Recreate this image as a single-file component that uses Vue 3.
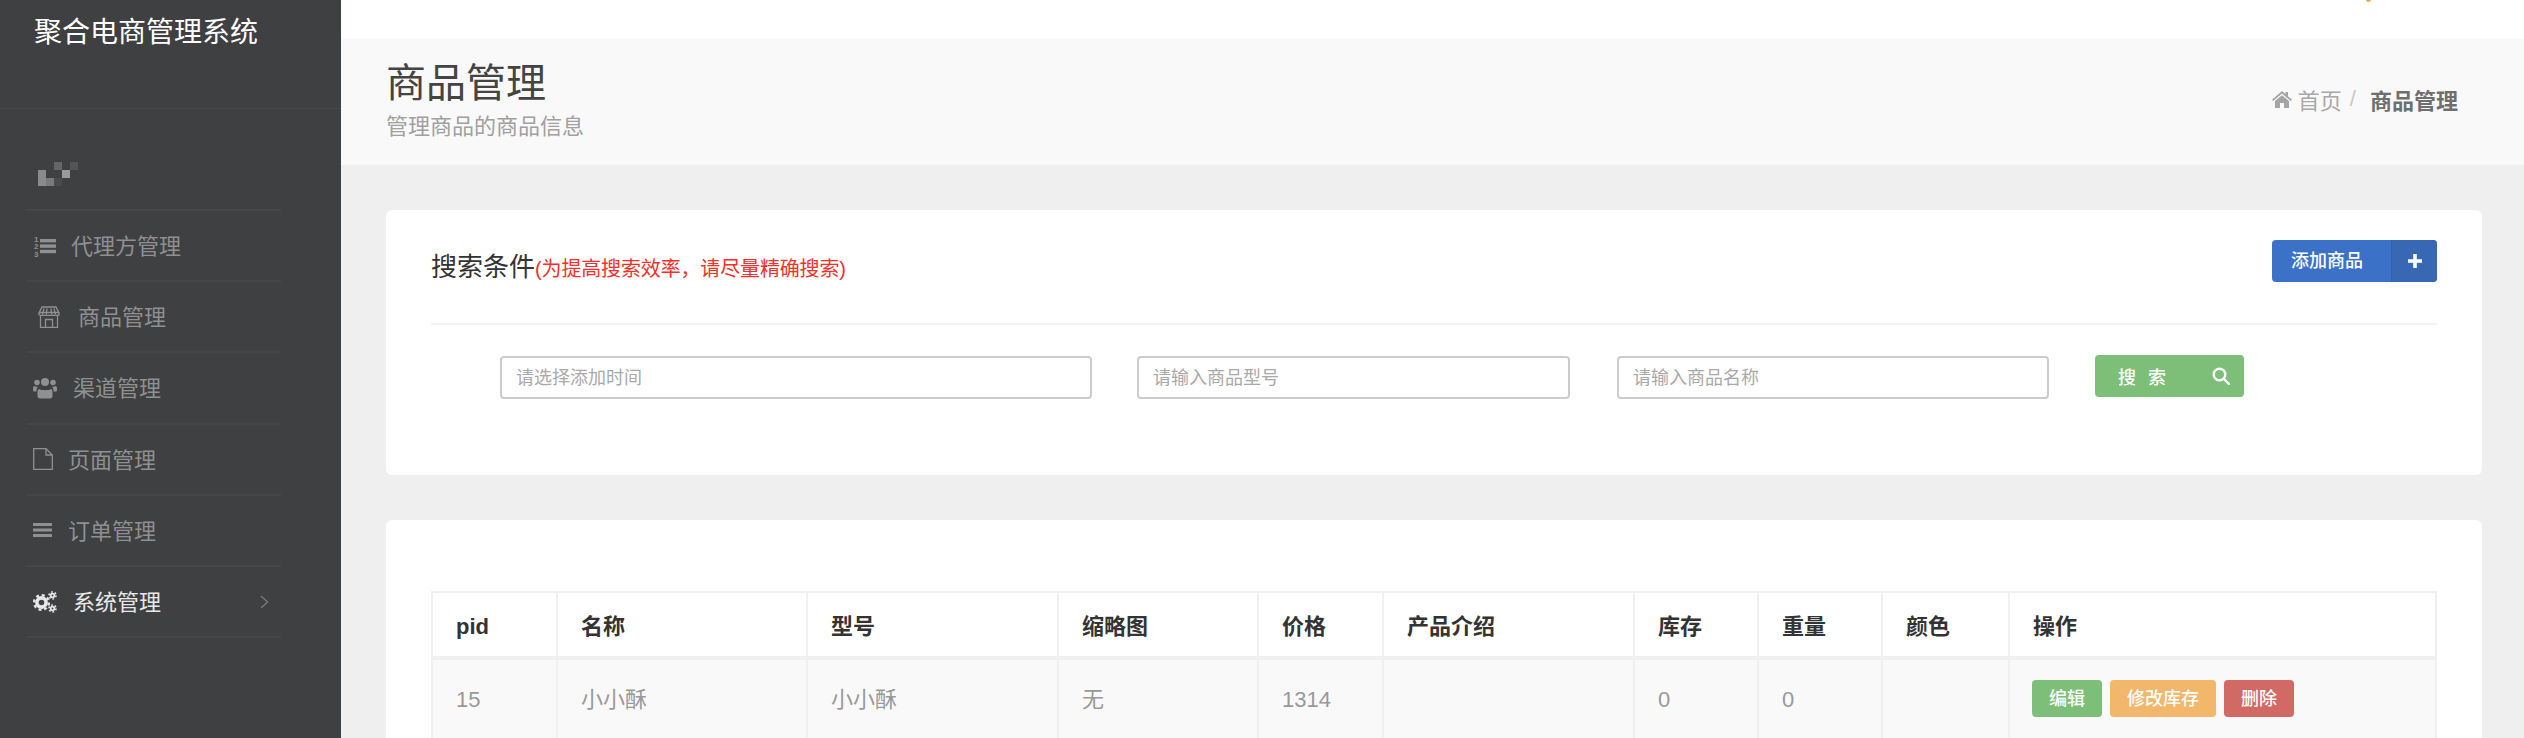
<script setup>
const cols = [
  { label: 'pid', w: 125 }, { label: '名称', w: 250 }, { label: '型号', w: 251 }, { label: '缩略图', w: 200 },
  { label: '价格', w: 125 }, { label: '产品介绍', w: 251 }, { label: '库存', w: 124 }, { label: '重量', w: 124 },
  { label: '颜色', w: 127 }, { label: '操作', w: 427 }
]
const row = ['15', '小小酥', '小小酥', '无', '1314', '', '0', '0', '']
</script>

<template>
  <div class="app">
    <aside class="side">
      <div class="brand"><span>聚合电商管理系统</span></div>
      <ul class="nav">
        <li class="nav-item first">
          <svg class="mosaic" width="40" height="24" viewBox="0 0 40 24">
            <rect x="0" y="8" width="8" height="16" fill="#8b8b8b" />
            <rect x="8" y="16" width="8" height="8" fill="#7b7b7b" />
            <rect x="16" y="0" width="8" height="8" fill="#666" />
            <rect x="24" y="8" width="8" height="8" fill="#9a9a9a" />
            <rect x="32" y="0" width="8" height="8" fill="#555" />
            <rect x="16" y="16" width="8" height="8" fill="#4a4b4d" />
          </svg>
        </li>
        <li class="nav-item">
          <svg class="ic i-list" viewBox="0 0 22 22" fill="currentColor">
            <rect x="6" y="4" width="16" height="3.4" />
            <rect x="6" y="9.4" width="16" height="3.4" />
            <rect x="6" y="14.8" width="16" height="3.4" />
            <text x="0" y="6.5" class="tiny">1</text>
            <text x="0" y="14" class="tiny">2</text>
            <text x="0" y="21.5" class="tiny">3</text>
          </svg>
          <span>代理方管理</span>
        </li>
        <li class="nav-item">
          <svg class="ic i-shop" viewBox="0 0 22 22" fill="none" stroke="currentColor" stroke-width="1.3">
            <path d="M4 1h14l3.2 6.4a2 2 0 0 1-2 2h-16.400a2 2 0 0 1-2-2z" />
            <path d="M.8 6.500h20.400M6 2.500l-1.500 6M9 2.500l-.7 6M13 2.500l.7 6M16 2.500l1.500 6" />
            <path d="M2.500 9.500v12h17v-12M7.500 21.500v-8h7v8" />
          </svg>
          <span>商品管理</span>
        </li>
        <li class="nav-item">
          <svg class="ic i-wide" viewBox="0 0 24 22" fill="currentColor">
            <circle cx="12" cy="5" r="4" />
            <circle cx="4" cy="5.500" r="2.800" />
            <circle cx="20" cy="5.500" r="2.800" />
            <path d="M6 12c2 1.600 10 1.600 12 0 1.200.6 1.500 2 1.500 4v3c0 1.500-1 2.500-2.500 2.500H7c-1.500 0-2.500-1-2.500-2.500v-3c0-2 .3-3.400 1.500-4z" />
            <path d="M0 11.500c0-1.500.6-2.500 1.500-2.500 1.500 1 3.500 1 4 .6-1.500 1-2 2.400-2 5H1.500C.5 14.600 0 14 0 13zM24 11.500c0-1.500-.6-2.500-1.500-2.500-1.500 1-3.500 1-4 .6 1.500 1 2 2.400 2 5h2c1 0 1.500-.6 1.500-1.600z" />
          </svg>
          <span>渠道管理</span>
        </li>
        <li class="nav-item">
          <svg class="ic i-file" viewBox="0 0 20 22" fill="none" stroke="currentColor" stroke-width="1.300">
            <path d="M.7.700h12.300l6.300 6.300v14.300H.7z" />
            <path d="M13 .7v6.300h6.300" />
          </svg>
          <span>页面管理</span>
        </li>
        <li class="nav-item">
          <svg class="ic i-file" viewBox="0 0 20 22" fill="currentColor">
            <rect x="0" y="4" width="19" height="3" rx=".5" />
            <rect x="0" y="9.500" width="19" height="3" rx=".5" />
            <rect x="0" y="15" width="19" height="3" rx=".5" />
          </svg>
          <span>订单管理</span>
        </li>
        <li class="nav-item active">
          <svg class="ic i-wide" viewBox="0 0 24 22" fill="none" stroke="currentColor">
            <circle cx="8.500" cy="11.500" r="4.600" stroke-width="3.600" />
            <circle cx="8.500" cy="11.500" r="7.400" stroke-width="2.400" stroke-dasharray="3 2.810" />
            <circle cx="19.500" cy="4.500" r="1.800" stroke-width="1.800" />
            <circle cx="19.500" cy="4.500" r="3.500" stroke-width="1.600" stroke-dasharray="1.800 1.870" />
            <circle cx="19.500" cy="17.500" r="1.800" stroke-width="1.800" />
            <circle cx="19.500" cy="17.500" r="3.500" stroke-width="1.600" stroke-dasharray="1.800 1.870" />
          </svg>
          <span>系统管理</span>
          <svg class="chev" width="9" height="14" viewBox="0 0 9 14" fill="none" stroke="#77787a" stroke-width="1.400">
            <path d="M1 1l6.500 6L1 13" />
          </svg>
        </li>
      </ul>
    </aside>

    <main class="main">
      <header class="top"><i class="dot"></i></header>
      <section class="page-bar">
        <div class="titles">
          <h1>商品管理</h1>
          <p>管理商品的商品信息</p>
        </div>
        <nav class="crumb">
          <svg width="20" height="17" viewBox="0 0 20 17" fill="#a5a5a5">
            <path d="M10 0l3.500 3V1h2.500v4.200L20 8.700l-1.200 1.300L10 2.600 1.200 10 0 8.700z" />
            <path d="M10 4.200l7 5.800v7h-5v-5H8v5H3v-7z" />
          </svg>
          <span class="home">首页</span>
          <span class="sep">/</span>
          <b>商品管理</b>
        </nav>
      </section>

      <div class="content">
        <section class="card search">
          <div class="card-head">
            <div class="card-title">搜索条件<span class="hint">(为提高搜索效率，请尽量精确搜索)</span></div>
            <button class="add">
              <span class="add-text">添加商品</span>
              <span class="add-ic">
                <svg width="14" height="14" viewBox="0 0 14 14" fill="#fff"><path d="M5.200 0h3.600v5.200H14v3.600H8.800V14H5.200V8.800H0V5.200h5.200z" /></svg>
              </span>
            </button>
          </div>
          <div class="filters">
            <input class="f f1" placeholder="请选择添加时间" />
            <input class="f f2" placeholder="请输入商品型号" />
            <input class="f f3" placeholder="请输入商品名称" />
            <button class="go">
              <span>搜 索</span>
              <svg width="18" height="18" viewBox="0 0 18 18" fill="none" stroke="#fff" stroke-width="2.400">
                <circle cx="7.500" cy="7.500" r="5.800" />
                <path d="M11.800 11.800l5 5" stroke-linecap="round" />
              </svg>
            </button>
          </div>
        </section>

        <section class="card list">
          <table>
            <colgroup><col v-for="c in cols" :key="c.label" :style="{ width: c.w + 'px' }" /></colgroup>
            <thead>
              <tr><th v-for="c in cols" :key="c.label">{{ c.label }}</th></tr>
            </thead>
            <tbody>
              <tr>
                <td v-for="(v, i) in row" :key="i">{{ v }}</td>
                <td class="ops">
                  <button class="b green">编辑</button>
                  <button class="b orange">修改库存</button>
                  <button class="b red">删除</button>
                </td>
              </tr>
            </tbody>
          </table>
        </section>
      </div>
    </main>
  </div>
</template>

<style>
html, body { margin: 0; overflow: hidden; background: #efefef; }
</style>

<style scoped>
* { box-sizing: border-box; }
.app {
  display: flex;
  width: 2524px;
  height: 738px;
  overflow: hidden;
  font-family: "Liberation Sans", "Noto Sans CJK SC", sans-serif;
  color: #333;
}
.side { width: 341px; flex: none; background: #3f4042; }
.brand {
  height: 109px;
  padding: 14px 0 0 34px;
  border-bottom: 1px solid #47484a;
  color: #fff;
  font-size: 28px;
  line-height: 38px;
}
.nav { list-style: none; margin: 0; padding: 0 60px 0 26px; }
.nav-item {
  display: flex;
  align-items: center;
  height: 71.2px;
  padding-left: 7px;
  border-bottom: 2px solid #454648;
  color: #8f9091;
  font-size: 22px;
}
.nav-item span { padding-bottom: 3px; }
.nav-item.first { height: 102px; padding: 53px 0 0 12px; align-items: flex-start; }
.nav-item.active { color: #e8e8e8; }
.ic { flex: none; height: 22px; }
.i-list { width: 22px; margin: 0 15px 0 1px; }
.i-shop { width: 22px; margin: 0 18px 0 5px; }
.i-wide { width: 24px; margin-right: 16px; }
.i-file { width: 20px; margin-right: 15px; }
.tiny { font-size: 8px; font-weight: 700; font-family: "Liberation Sans", sans-serif; }
.chev { margin-left: auto; margin-right: 12px; }

.main { flex: 1; min-width: 0; }
.top { position: relative; height: 39px; background: #fff; }
.dot {
  position: absolute;
  left: 2025px;
  top: -3px;
  width: 5px;
  height: 5px;
  border-radius: 50%;
  background: #e9a84c;
}
.page-bar {
  display: flex;
  justify-content: space-between;
  height: 126px;
  padding: 0 66px 0 45px;
  background: #f9f9f9;
}
.titles h1 {
  margin: 19px 0 0;
  font-size: 40px;
  line-height: 50px;
  font-weight: 400;
  color: #444;
}
.titles p {
  margin: 6px 0 0;
  font-size: 22px;
  line-height: 26px;
  color: #a0a0a0;
}
.crumb {
  display: flex;
  align-items: center;
  height: 120px;
  font-size: 22px;
}
.crumb .home { margin-left: 6px; color: #a8a8a8; }
.crumb .sep { margin: 0 14px 0 8px; color: #c8c8c8; }
.crumb b { color: #6f6f6f; }

.content { padding: 45px 42px 0 45px; }
.card { background: #fff; border-radius: 6px; padding: 0 45px; }
.search { height: 265px; }
.list { margin-top: 45px; padding-top: 71px; height: 400px; }
.card-head {
  display: flex;
  justify-content: space-between;
  height: 115px;
  padding-top: 30px;
  border-bottom: 2px solid #f3f3f3;
}
.card-title { font-size: 26px; line-height: 54px; color: #333; height: 54px; }
.hint { font-size: 20px; letter-spacing: -0.15px; color: #f5302b; }
.add {
  display: flex;
  align-items: stretch;
  height: 42px;
  padding: 0;
  border: 0;
  border-radius: 4px;
  overflow: hidden;
  font: inherit;
  color: #fff;
  background: #3b72c8;
}
.add-text { width: 119px; padding-right: 9px; font-size: 18px; font-weight: 500; line-height: 42px; text-align: center; }
.add-ic {
  display: flex;
  align-items: center;
  justify-content: center;
  width: 46px;
  background: #3867b3;
  border-left: 1px solid #3562aa;
}
.filters { display: flex; align-items: flex-start; padding: 31px 0 0 69px; }
.f {
  height: 43px;
  padding: 2px 14px 0;
  border: 2px solid #ccc;
  border-radius: 4px;
  outline: 0;
  background: #fff;
  font: inherit;
  font-size: 18px;
}
.f::placeholder { color: #a9a9a9; opacity: 1; }
.f1 { width: 592px; margin-right: 45px; }
.f2 { width: 433px; margin-right: 47px; }
.f3 { width: 432px; margin-right: 46px; }
.go {
  display: flex;
  align-items: center;
  justify-content: space-between;
  width: 149px;
  height: 42px;
  margin-top: -1px;
  padding: 0 14px 0 23px;
  border: 0;
  border-radius: 4px;
  background: #7dbf78;
  color: #fff;
  font: inherit;
  font-size: 18px;
  font-weight: 500;
  letter-spacing: 1px;
  word-spacing: 5px;
}
table {
  table-layout: fixed;
  border-collapse: separate;
  border-spacing: 0;
  border-top: 2px solid #f0f0f0;
  border-left: 2px solid #f0f0f0;
}
th, td {
  padding: 0 0 0 23px;
  border-right: 2px solid #f0f0f0;
  text-align: left;
  font-size: 22px;
  line-height: 26px;
}
th {
  height: 65px;
  padding-top: 4px;
  border-bottom: 2px solid #f0f0f0;
  font-weight: 700;
  color: #333;
}
td {
  height: 80px;
  padding-top: 2px;
  border-top: 2px solid #f0f0f0;
  background: #f9f9f9;
  color: #999;
}
td.ops { padding: 20px 0 0 22px; white-space: nowrap; vertical-align: top; }
.b {
  height: 37px;
  margin-right: 8px;
  padding: 0;
  border: 0;
  border-radius: 4px;
  color: #fff;
  font: inherit;
  font-size: 18px;
  font-weight: 500;
  vertical-align: top;
}
.green { width: 70px; background: #7dbf78; }
.orange { width: 106px; background: #f2b76b; }
.red { width: 70px; margin-right: 0; background: #d16a65; }
</style>
